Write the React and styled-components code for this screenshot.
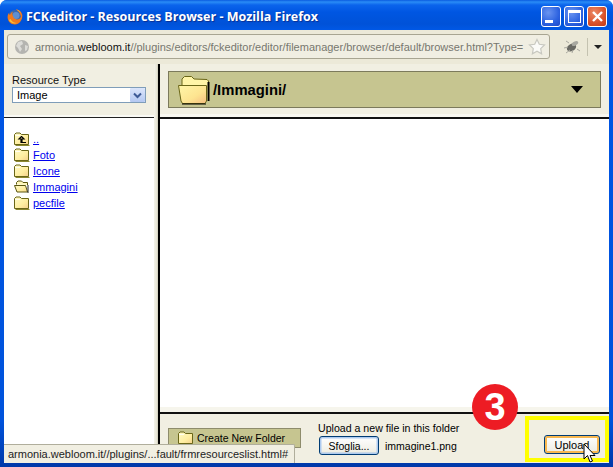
import styled, { createGlobalStyle } from "styled-components";

const GlobalStyle = createGlobalStyle`
  * { box-sizing: border-box; }
  html, body { margin: 0; padding: 0; background: #fff; }
  body { font-family: "Liberation Sans", Arial, sans-serif; font-size: 11px; color: #000; }
`;

const FILES = [
  { name: "..", kind: "up" },
  { name: "Foto", kind: "closed" },
  { name: "Icone", kind: "closed" },
  { name: "Immagini", kind: "open" },
  { name: "pecfile", kind: "closed" },
];

const FolderIcon = ({ kind = "closed" }) => (
  <svg width="16" height="14" viewBox="0 0 16 14">
    <defs>
      <linearGradient id="fold" x1="0" y1="0" x2="1" y2="1">
        <stop offset="0" stopColor="#fffbc8" />
        <stop offset="0.6" stopColor="#ffeea0" />
        <stop offset="1" stopColor="#f4d08c" />
      </linearGradient>
    </defs>
    {kind === "open" ? (
      <>
        <path d="M2.500 4.500V2.500L4 1h3.500L9 2.500h4.500V5" fill="#fff7b8" stroke="#5a5610" />
        <path d="M.5 5.500h11l2 6.500H3z" fill="url(#fold)" stroke="#5a5610" />
        <path d="M14 5v8" stroke="#222" />
      </>
    ) : (
      <>
        <path d="M.5 12.500V2.500L2 1h4l1.500 1.500h7v10z" fill="url(#fold)" stroke="#6a6618" />
        <path d="M1 3.500h5" stroke="#fffef0" />
        <path d="M1.500 13.500h14" stroke="#8c8830" />
        {kind === "up" && (
          <path d="M7.500 4.500L5 7h2v3.500h5M7.500 4.500L10 7H8v3" fill="none" stroke="#000" strokeWidth="1.200" />
        )}
      </>
    )}
  </svg>
);

const BigFolder = () => (
  <svg width="33" height="30" viewBox="0 0 33 30">
    <defs>
      <linearGradient id="bigfold" x1="0" y1="0" x2="1" y2="1">
        <stop offset="0" stopColor="#fff6a8" />
        <stop offset="0.6" stopColor="#fde490" />
        <stop offset="1" stopColor="#f5bd80" />
      </linearGradient>
    </defs>
    <path d="M4 13V4l2.500-2.500h7L16 4l13 .5L30.500 6v20" fill="#fff5a8" stroke="#6a6618" />
    <path d="M30.500 7v19" stroke="#000" strokeWidth="2" />
    <path d="M.5 10.500h28V26l-1.500 2.500H4.500L3 26z" fill="url(#bigfold)" stroke="#6a6618" />
    <path d="M4 29h24" stroke="#000" />
  </svg>
);

const FirefoxIcon = () => (
  <svg width="16" height="16" viewBox="0 0 16 16">
    <circle cx="8" cy="8" r="7" fill="#3a68ae" />
    <circle cx="9" cy="6.500" r="3.500" fill="#5f8fd0" />
    <path d="M9 .5c3.500 0 5.800 2.500 6.300 5.500.4 4.500-3 9.500-7.300 9.500C3.500 15.500.6 12 .6 8c0-1.500.6-3 1.400-4 0 1 .4 1.600 1 2 .3-1.500 1.500-2.500 3-3.200-.6 1.200-.8 2-.5 3 .5 2.500 2 4.700 4.500 4.700 2 0 3.500-1.200 4-3-.5-2.500-2-5-5-7z" fill="#ef7a1e" />
    <path d="M2 11c1.500 3 5 4 8 3-2.500 0-5-1-6.500-4zM9 .5c2 .3 4 1.500 5 3.500-1.500-1.500-3-2.500-5-3.500z" fill="#f9c33a" />
  </svg>
);

const GlobeIcon = () => (
  <svg width="16" height="16" viewBox="0 0 16 16">
    <circle cx="8" cy="8" r="7" fill="#b4b4b0" />
    <path d="M4 3l4-1 1 3-3 2 2 3-2 3-2-4-2-2zM11 6l3 1-1 4-2 1z" fill="#dcdcd8" />
  </svg>
);

const StarIcon = () => (
  <svg width="18" height="18" viewBox="0 0 18 18">
    <path d="M9 1.500l2.300 4.800 5.200.7-3.800 3.600.9 5.200L9 13.300l-4.600 2.500.9-5.200L1.500 7l5.200-.7z" fill="#fbfbf8" stroke="#c8c8c0" strokeWidth="1.200" />
  </svg>
);

const BugIcon = () => (
  <svg width="18" height="16" viewBox="0 0 18 16">
    <ellipse cx="8.500" cy="8.500" rx="5" ry="3.500" transform="rotate(-30 8.500 8.500)" fill="#6a6a64" />
    <ellipse cx="12" cy="4.500" rx="3.500" ry="2" transform="rotate(-30 12 4.500)" fill="#a8a8a0" />
    <path d="M1 9l4-1M3 14l4-3M9 14l1-3M14 10l3 2M6 4L3 2" stroke="#aaa9a0" />
  </svg>
);

const CursorIcon = () => (
  <svg width="14" height="21" viewBox="0 0 14 21">
    <path d="M1 1v15l3.500-3.500L7 19l2.500-1-2.500-5.500h5z" fill="#fff" stroke="#000" />
  </svg>
);

const App = () => (
  <>
    <GlobalStyle />
    <Window>
      <TitleBar>
        <TitleIcon><FirefoxIcon /></TitleIcon>
        <TitleText>FCKeditor - Resources Browser - Mozilla Firefox</TitleText>
        <CaptionGroup>
          <CaptionButton aria-label="Minimize"><MinGlyph /></CaptionButton>
          <CaptionButton aria-label="Maximize"><MaxGlyph /></CaptionButton>
          <CaptionButton $close aria-label="Close">
            <svg width="13" height="13" viewBox="0 0 13 13">
              <path d="M2 2l9 9M11 2l-9 9" stroke="#fff" strokeWidth="2.400" />
            </svg>
          </CaptionButton>
        </CaptionGroup>
      </TitleBar>
      <Body>
        <Toolbar>
          <AddressBar>
            <GlobeIcon />
            <AddressText>
              armonia.<b>webloom.it</b>//plugins/editors/fckeditor/editor/filemanager/browser/default/browser.html?Type=
            </AddressText>
            <StarIcon />
          </AddressBar>
          <AddonArea>
            <BugIcon />
            <ToolSep />
            <SmallArrow />
          </AddonArea>
        </Toolbar>
        <Frames>
          <LeftFrame>
            <TypePanel>
              <TypeLabel>Resource Type</TypeLabel>
              <TypeSelect>
                Image
                <SelectButton>
                  <svg width="9" height="7" viewBox="0 0 9 7">
                    <path d="M1 1.500l3.500 3.500L8 1.500" fill="none" stroke="#3d5a96" strokeWidth="2" />
                  </svg>
                </SelectButton>
              </TypeSelect>
            </TypePanel>
            <FolderList>
              {FILES.map((f) => (
                <FolderRow key={f.name}>
                  <FolderIcon kind={f.kind} />
                  <FolderLink href="#">{f.name}</FolderLink>
                </FolderRow>
              ))}
            </FolderList>
          </LeftFrame>
          <Splitter />
          <RightFrame>
            <PathPanel>
              <PathBar>
                <BigFolder />
                <PathText>/Immagini/</PathText>
                <PathArrow />
              </PathBar>
            </PathPanel>
            <ResourceArea />
            <BottomPanel>
              <CreateFolder>
                <FolderIcon kind="closed" />
                Create New Folder
              </CreateFolder>
              <UploadGroup>
                <UploadLabel>Upload a new file in this folder</UploadLabel>
                <FileRow>
                  <XpButton $w={60}>Sfoglia...</XpButton>
                  immagine1.png
                </FileRow>
              </UploadGroup>
              <UploadButton>Upload</UploadButton>
            </BottomPanel>
          </RightFrame>
        </Frames>
        <StatusTip>armonia.webloom.it//plugins/...fault/frmresourceslist.html#</StatusTip>
      </Body>
      <Highlight />
      <StepBadge>3</StepBadge>
      <Cursor><CursorIcon /></Cursor>
    </Window>
  </>
);

const Window = styled.div`
  position: relative;
  width: 613px;
  height: 467px;
  display: flex;
  flex-direction: column;
  overflow: hidden;
  border-radius: 7px 7px 0 0;
  background: linear-gradient(180deg, #0055e5 0, #0053dc 90%, #0038a8 100%);
  padding: 0 4px 4px;
`;

const TitleBar = styled.div`
  flex: 0 0 30px;
  margin: 0 -4px;
  padding: 0 6px 0 7px;
  display: flex;
  align-items: center;
  background: linear-gradient(
    180deg,
    #0a5be0 0,
    #2a8cf6 2px,
    #0b64ec 5px,
    #0056e2 12px,
    #0052d8 24px,
    #0058e6 30px
  );
`;

const TitleIcon = styled.div`
  display: flex;
  margin-top: 3px;
`;

const TitleText = styled.div`
  flex: 1;
  margin-left: 3px;
  margin-top: 3px;
  color: #fff;
  font-family: "Open Sans", sans-serif;
  font-weight: 700;
  font-size: 12.500px;
  white-space: nowrap;
  text-shadow: 1px 1px 1px #0a2f90;
`;

const CaptionGroup = styled.div`
  display: flex;
  gap: 3px;
  margin-top: 3px;
`;

const CaptionButton = styled.div`
  width: 20px;
  height: 21px;
  display: flex;
  align-items: center;
  justify-content: center;
  border: 1px solid #fff;
  border-radius: 3px;
  background: ${(p) =>
    p.$close
      ? "radial-gradient(circle at 35% 30%, #ec8a66, #d9512a 60%, #c23a14)"
      : "radial-gradient(circle at 35% 30%, #6a94f0, #2c62e0 60%, #1c48c8)"};
`;

const MinGlyph = styled.div`
  width: 8px;
  height: 3px;
  background: #fff;
  margin-top: 10px;
  margin-right: 4px;
`;

const MaxGlyph = styled.div`
  width: 13px;
  height: 13px;
  border: 1px solid #fff;
  border-top-width: 3px;
`;

const Body = styled.div`
  position: relative;
  flex: 1;
  min-height: 0;
  display: flex;
  flex-direction: column;
  background: #ece9d8;
`;

const Toolbar = styled.div`
  flex: 0 0 34px;
  display: flex;
  align-items: center;
  padding: 0 0 0 3px;
  background: #ece9d8;
`;

const AddressBar = styled.div`
  flex: 0 0 543px;
  min-width: 0;
  height: 25px;
  margin-top: -1px;
  display: flex;
  align-items: center;
  padding: 0 3px 0 6px;
  border: 1px solid #a8a592;
  border-radius: 3px;
  background: #f0eee2;
`;

const AddressText = styled.div`
  flex: 1;
  min-width: 0;
  margin-left: 5px;
  white-space: nowrap;
  color: #77776f;
  font-size: 11px;
  b {
    font-weight: 400;
    color: #111;
  }
`;

const AddonArea = styled.div`
  flex: 1;
  display: flex;
  align-items: center;
  padding-left: 13px;
`;

const ToolSep = styled.div`
  width: 1px;
  height: 18px;
  margin-left: 6px;
  background: #c4c2b0;
`;

const SmallArrow = styled.div`
  margin-left: 6px;
  border-left: 4px solid transparent;
  border-right: 4px solid transparent;
  border-top: 4px solid #222;
`;

const Frames = styled.div`
  flex: 1;
  min-height: 0;
  display: flex;
`;

const LeftFrame = styled.div`
  flex: 0 0 150px;
  display: flex;
  flex-direction: column;
  background: #fff;
`;

const TypePanel = styled.div`
  flex: 0 0 54px;
  padding: 10px 4px 0 8px;
  background: #f1efe2;
  border-bottom: 1px solid #222;
  box-shadow: inset 0 -2px 0 #fafaf5;
`;

const TypeLabel = styled.div`
  font-size: 11px;
  line-height: 13px;
  color: #111;
`;

const TypeSelect = styled.div`
  width: 134px;
  height: 16px;
  padding-left: 4px;
  display: flex;
  align-items: center;
  justify-content: space-between;
  border: 1px solid #7f9db9;
  background: #fff;
  font-size: 11px;
`;

const SelectButton = styled.div`
  width: 15px;
  height: 14px;
  display: flex;
  align-items: center;
  justify-content: center;
  background: linear-gradient(180deg, #dbe5fb, #b4c8f2);
  border-radius: 1px;
`;

const FolderList = styled.div`
  padding: 13px 0 0 10px;
  display: flex;
  flex-direction: column;
`;

const FolderRow = styled.div`
  height: 16px;
  display: flex;
  align-items: center;
`;

const FolderLink = styled.a`
  margin-left: 3px;
  color: #0000ee;
  font-size: 11px;
`;

const Splitter = styled.div`
  flex: 0 0 6px;
  background: linear-gradient(90deg, #f4f3ea 0, #e6e4d4 3px, #c8c6b4 4px, #000 4px, #000 6px);
`;

const RightFrame = styled.div`
  flex: 1;
  min-width: 0;
  display: flex;
  flex-direction: column;
  background: #fff;
`;

const PathPanel = styled.div`
  flex: 0 0 55px;
  padding: 7px 8px 0;
  background: #f1efe2;
  border-bottom: 2px solid #111;
  box-shadow: inset 0 -3px 0 #f8f7f0;
`;

const PathBar = styled.div`
  height: 37px;
  display: flex;
  align-items: center;
  padding: 0 17px 0 9px;
  border: 1px solid #7c7a5c;
  background: #c6c590;
`;

const PathText = styled.div`
  flex: 1;
  margin-left: 2px;
  font-weight: 700;
  font-size: 14.800px;
`;

const PathArrow = styled.div`
  border-left: 6px solid transparent;
  border-right: 6px solid transparent;
  border-top: 7px solid #000;
`;

const ResourceArea = styled.div`
  flex: 1;
  background: #fff;
`;

const BottomPanel = styled.div`
  flex: 0 0 51px;
  display: flex;
  align-items: flex-start;
  padding: 14px 9px 0 8px;
  background: #f1efe2;
  border-top: 2px solid #111;
  box-shadow: 0 -5px 0 #f6f5ec;
`;

const CreateFolder = styled.div`
  width: 133px;
  height: 20px;
  padding-left: 9px;
  display: flex;
  align-items: center;
  gap: 3px;
  border: 1px solid #8e8c6c;
  background: #c6c590;
  font-size: 10.500px;
`;

const UploadGroup = styled.div`
  margin-left: 17px;
  margin-top: -7px;
  flex: 1;
`;

const UploadLabel = styled.div`
  font-size: 10.600px;
  line-height: 14px;
`;

const FileRow = styled.div`
  display: flex;
  align-items: center;
  gap: 6px;
  margin-top: 1px;
  margin-left: 1px;
  font-size: 10.500px;
`;

const XpButton = styled.div`
  width: ${(p) => p.$w}px;
  height: 19px;
  display: flex;
  align-items: center;
  justify-content: center;
  border: 1px solid #003c74;
  border-radius: 3px;
  background: linear-gradient(180deg, #fff, #f0efe6 85%, #d8d4c4);
  box-shadow: inset 0 0 0 1.500px #aecbf0;
  font-size: 10.500px;
`;

const UploadButton = styled(XpButton).attrs({ $w: 56 })`
  margin-top: 7px;
  box-shadow: inset 0 0 0 2px #f8b850;
  font-size: 11px;
`;

const StatusTip = styled.div`
  position: absolute;
  left: 0;
  bottom: 0;
  width: 291px;
  height: 19px;
  padding: 3px 0 0 4px;
  border-top: 1px solid #b0ae9c;
  border-right: 1px solid #b0ae9c;
  border-top-right-radius: 2px;
  background: #f1efe2;
  color: #222;
  font-size: 11px;
  white-space: nowrap;
`;

const Highlight = styled.div`
  position: absolute;
  left: 525px;
  top: 416px;
  width: 84px;
  height: 46px;
  border: 4px solid #ffff00;
  pointer-events: none;
`;

const StepBadge = styled.div`
  position: absolute;
  left: 472px;
  top: 384px;
  width: 46px;
  height: 46px;
  border-radius: 50%;
  background: #ed1c24;
  color: #fff;
  display: flex;
  align-items: center;
  justify-content: center;
  font-weight: 700;
  font-size: 38px;
`;

const Cursor = styled.div`
  position: absolute;
  left: 583px;
  top: 443px;
  display: flex;
`;

export default App;
